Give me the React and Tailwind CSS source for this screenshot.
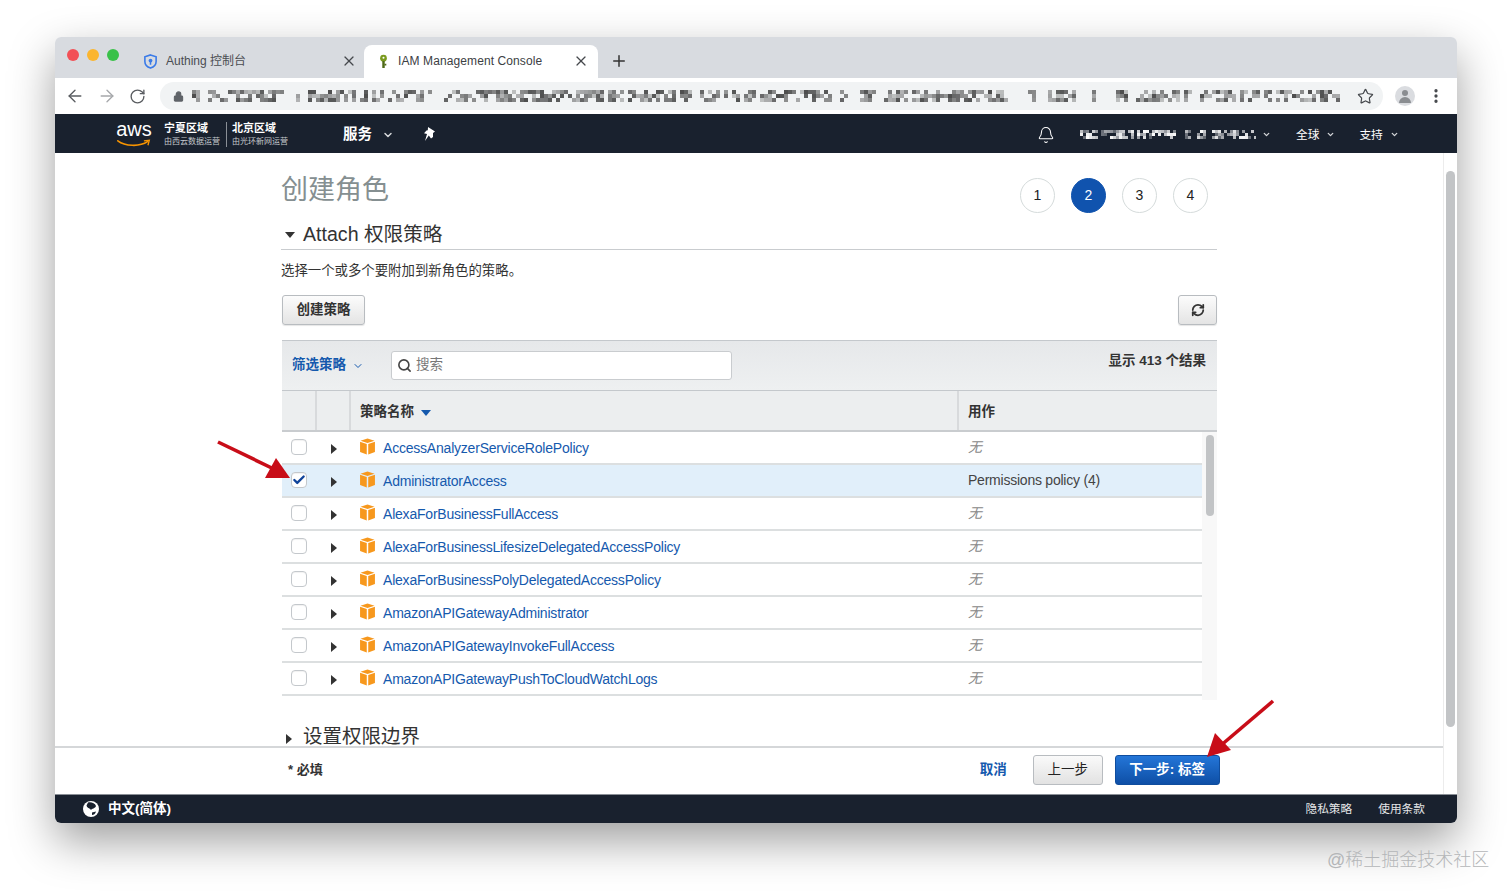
import { ArrowLeft, ArrowRight, RotateCw, Lock, Star, X, Plus, Bell, ChevronDown, Search, RefreshCw, Check, EllipsisVertical } from "lucide-react";

const policies = [
  "AccessAnalyzerServiceRolePolicy",
  "AdministratorAccess",
  "AlexaForBusinessFullAccess",
  "AlexaForBusinessLifesizeDelegatedAccessPolicy",
  "AlexaForBusinessPolyDelegatedAccessPolicy",
  "AmazonAPIGatewayAdministrator",
  "AmazonAPIGatewayInvokeFullAccess",
  "AmazonAPIGatewayPushToCloudWatchLogs",
];

// pixelated url / account name, stable between renders
function Mosaic({ width, height, cell = 4, seed = 7, color = "#222" }) {
  const cells = [];
  let s = seed;
  const next = () => {
    s = (s * 1103515245 + 12345) % 2147483648;
    return Math.floor(s / 65536) % 1000;
  };
  let gapLeft = 0;
  for (let x = 0; x < width; x += cell) {
    if (gapLeft > 0) {
      gapLeft -= 1;
      continue;
    }
    if (next() < 60) gapLeft = 1 + (next() % 3);
    for (let y = 0; y < height; y += cell) {
      const r = next();
      if (r < 380) continue;
      cells.push({ x, y, o: 0.3 + ((r % 70) / 100) });
    }
  }
  return (
    <svg width={width} height={height} className="block shrink-0">
      {cells.map((c) => (
        <rect key={`${c.x}-${c.y}`} x={c.x} y={c.y} width={cell} height={cell} fill={color} opacity={c.o} />
      ))}
    </svg>
  );
}

function Cube({ className }) {
  return (
    <svg viewBox="0 0 16 16" className={className}>
      <path d="M8 0.5 14.6 2.6 8 4.8 1.4 2.6Z" fill="#f7981d" />
      <path d="M1 3.6 7.3 5.7V15.6L1 13.2Z" fill="#f7981d" />
      <path d="M15 3.6 8.7 5.7V15.6L15 13.2Z" fill="#f7981d" />
    </svg>
  );
}

function Caret({ dir = "right", className }) {
  const d = dir === "right" ? "M1 0 7 5 1 10Z" : "M0 1 10 1 5 7Z";
  return (
    <svg viewBox="0 0 10 10" className={className}>
      <path d={d} fill="currentColor" />
    </svg>
  );
}

function PolicyRow({ name, selected }) {
  return (
    <div className={`flex h-[33px] items-center border-b-2 border-[#dcdfe0] ${selected ? "bg-[#e1effa]" : "bg-white"}`}>
      <div className="flex w-[34px] justify-center pr-px">
        <span className="mb-[2px] flex size-4 items-center justify-center rounded-[4px] border border-[#c4c8cc] bg-white shadow-[inset_0_1px_1px_rgba(0,0,0,0.06)]">
          {selected && <Check className="size-3.5 text-[#10439a]" strokeWidth={4} />}
        </span>
      </div>
      <div className="flex w-[34px] justify-center pl-[4px]">
        <Caret className="mt-[3px] size-2.5 text-[#333]" />
      </div>
      <div className="flex w-[608px] items-center pl-[9px]">
        <Cube className="mb-[3px] size-[17px]" />
        <span className="ml-[7px] mt-[1px] text-[14px] tracking-[-0.21px] text-[#1559ad]">{name}</span>
      </div>
      <div className="pl-[10px] text-[14px] tracking-[-0.23px] text-[#444]">
        {selected ? "Permissions policy (4)" : <span className="italic text-[#888]">无</span>}
      </div>
    </div>
  );
}

function StepCircle({ n, active }) {
  return (
    <div
      className={`flex size-[35px] items-center justify-center rounded-full border text-[14px] font-medium ${
        active ? "border-[#1053ae] bg-[#1053ae] text-white" : "border-[#d5dbdb] bg-white text-[#222]"
      }`}
    >
      {n}
    </div>
  );
}

export default function App() {
  return (
    <div className="relative h-[895px] w-[1512px] overflow-hidden bg-white pl-[55px] pt-[37px] font-['Liberation_Sans','Noto_Sans_CJK_SC',sans-serif] text-[#333]">
      <div className="flex h-[786px] w-[1402px] flex-col overflow-hidden rounded-[6px] shadow-[0_18px_45px_rgba(0,0,0,0.38)]">
        {/* Tab strip */}
        <div className="flex h-[41px] shrink-0 items-end bg-[#d8dbe0] pl-3">
          <div className="flex h-[33px] w-[76px] items-start gap-2 pt-[4px]">
            <span className="size-3 rounded-full bg-[#f25056]" />
            <span className="size-3 rounded-full bg-[#fbb52e]" />
            <span className="size-3 rounded-full bg-[#39c149]" />
          </div>
          <div className="flex h-[33px] w-[221px] items-center pb-[1px] text-[12px] text-[#4a4d52]">
            <svg viewBox="0 0 16 16" className="size-[15px]">
              <path d="M8 1 14 3V8C14 11.5 11.2 14 8 15 4.8 14 2 11.5 2 8V3Z" fill="none" stroke="#3b7be8" strokeWidth="1.7" />
              <circle cx="8" cy="7" r="2" fill="#3b7be8" />
              <path d="M8 8v3.5" stroke="#3b7be8" strokeWidth="1.6" />
            </svg>
            <span className="ml-[8px] flex-1">Authing 控制台</span>
            <X className="mr-[7px] size-[16px] text-[#45484c]" strokeWidth={1.8} />
          </div>
          <div className="flex h-[33px] w-[234px] items-center rounded-t-lg bg-white pb-[1px] pl-[12px] text-[12px] text-[#3c4043]">
            <svg viewBox="0 0 16 16" className="size-[15px]">
              <circle cx="8" cy="4.5" r="3.6" fill="#7a9a1e" />
              <circle cx="8" cy="4" r="1.1" fill="#fff" />
              <path d="M6.7 7.5H9.3V15H6.7Z" fill="#4f6a18" />
              <path d="M9 10.5H11V12.3H9Z" fill="#4f6a18" />
            </svg>
            <span className="ml-[7px] flex-1 tracking-[0.1px]">IAM Management Console</span>
            <X className="mr-[9px] size-[16px] text-[#45484c]" strokeWidth={1.8} />
          </div>
          <Plus className="mb-[8px] ml-[12px] size-[18px] text-[#333]" strokeWidth={2} />
        </div>

        {/* Toolbar */}
        <div className="flex h-[36px] shrink-0 items-center bg-white pl-[10px]">
          <ArrowLeft className="size-[20px] text-[#5a5d61]" strokeWidth={1.6} />
          <ArrowRight className="ml-[12px] size-[20px] text-[#a6a8ab]" strokeWidth={1.6} />
          <RotateCw className="ml-[12px] size-[17px] text-[#5a5d61]" strokeWidth={1.9} />
          <div className="ml-[14px] flex h-[28px] w-[1223px] items-center rounded-full bg-[#f1f3f4] pl-[13px]">
            <Lock className="size-[11px] fill-[#5f6368] text-[#5f6368]" strokeWidth={2.4} />
            <div className="ml-[8px] opacity-80 blur-[0.5px]">
              <Mosaic width={1148} height={12} cell={4} />
            </div>
            <Star className="ml-[17px] size-[17px] text-[#45484c]" strokeWidth={1.7} />
          </div>
          <div className="ml-[12px] flex size-[20px] flex-col items-center justify-center gap-px rounded-full bg-[#dadce0]">
            <span className="size-[6px] rounded-full bg-[#8a8d91]" />
            <span className="h-[6px] w-[12px] rounded-t-full bg-[#8a8d91]" />
          </div>
          <EllipsisVertical className="ml-[12px] size-[18px] text-[#45484c]" strokeWidth={2.4} />
        </div>

        {/* AWS nav */}
        <div className="flex h-[39px] shrink-0 items-center bg-[#19212e] pl-[60px] pt-[2px] text-white">
          <div className="relative -mt-[2px] h-[28px] w-[38px]">
            <span className="block text-center text-[20px] leading-[19px] font-normal">aws</span>
            <svg viewBox="0 0 38 10" className="absolute bottom-0 left-0 h-[9px] w-[38px]">
              <path d="M1 2C9 8 25 9 34 3" fill="none" stroke="#f79400" strokeWidth="1.8" strokeLinecap="round" />
              <path d="M30 2 36 1.5 34.5 7" fill="none" stroke="#f79400" strokeWidth="1.5" />
            </svg>
          </div>
          <div className="-mt-[1px] ml-[11px] w-[62px]">
            <div className="text-[11px] leading-[13px] font-bold">宁夏区域</div>
            <div className="mt-[2px] whitespace-nowrap text-[8px] leading-[10px] text-[#c4c8cc]">由西云数据运营</div>
          </div>
          <div className="-mt-[1px] h-[25px] w-px bg-[#8a8f96]" />
          <div className="-mt-[1px] ml-[5px] w-[111px]">
            <div className="text-[11px] leading-[13px] font-bold">北京区域</div>
            <div className="mt-[2px] whitespace-nowrap text-[8px] leading-[10px] text-[#c4c8cc]">由光环新网运营</div>
          </div>
          <span className="text-[14.5px] font-bold">服务</span>
          <ChevronDown className="ml-[10px] size-[12px] text-[#d5d7da]" strokeWidth={3} />
          <svg viewBox="0 0 16 16" className="-mt-[2px] ml-[28px] size-[16px]">
            <path d="M6 1 13 5.5 11 7 11 11 9 12.5 6.8 9.6 3 15 5 8 2 7.2 4.5 4.5 5.8 4.3Z" fill="#fff" />
          </svg>
          <div className="ml-[599px] flex items-center">
            <Bell className="size-[18px] text-white" strokeWidth={1.4} />
            <div className="ml-[25px]">
              <Mosaic width={176} height={9} cell={3} seed={41} color="#fff" />
            </div>
            <ChevronDown className="ml-[6px] size-[9px] text-[#d5d7da]" strokeWidth={3.5} />
            <span className="ml-[25px] text-[11.7px]">全球</span>
            <ChevronDown className="ml-[7px] size-[9px] text-[#d5d7da]" strokeWidth={3.5} />
            <span className="ml-[24px] text-[11.7px]">支持</span>
            <ChevronDown className="ml-[7px] size-[9px] text-[#d5d7da]" strokeWidth={3.5} />
          </div>
        </div>

        {/* Body */}
        <div className="flex min-h-0 flex-1 bg-white">
          <div className="flex w-[1389px] flex-col border-r border-[#ececec]">
            <div className="h-[593px] overflow-hidden pl-[226px]">
              <div className="w-[936px]">
                <div className="flex h-[60px] items-start justify-between pr-[9px] pt-[26px]">
                  <h1 className="-mt-[7px] text-[27px] leading-[36px] font-normal text-[#858f91]">创建角色</h1>
                  <div className="-mt-px flex gap-4">
                    <StepCircle n={1} />
                    <StepCircle n={2} active />
                    <StepCircle n={3} />
                    <StepCircle n={4} />
                  </div>
                </div>
                <div className="mt-[8px] flex h-[29px] items-center gap-[8px] border-b border-[#c9cccf] pb-[2px] pl-[4px]">
                  <Caret dir="down" className="mt-1 size-2.5 text-[#333]" />
                  <span className="text-[19.6px] leading-[26px]">Attach 权限策略</span>
                </div>
                <p className="mt-[12px] text-[13.4px] leading-[18px] text-[#333]">选择一个或多个要附加到新角色的策略。</p>
                <div className="mt-[15px] flex justify-between pl-px">
                  <button className="h-[30px] w-[83px] rounded-[3px] border border-[#b8bcc0] bg-linear-to-b from-[#fcfcfc] to-[#e4e4e4] text-[13.5px] font-bold text-[#333] shadow-[0_1px_1px_rgba(0,0,0,0.1)]">
                    创建策略
                  </button>
                  <button className="flex h-[30px] w-[39px] items-center justify-center rounded-[3px] border border-[#b8bcc0] bg-linear-to-b from-[#fcfcfc] to-[#e4e4e4] shadow-[0_1px_1px_rgba(0,0,0,0.1)]">
                    <RefreshCw className="size-[14px] text-[#333]" strokeWidth={3} />
                  </button>
                </div>

                {/* Policy table */}
                <div className="mt-[15px] pl-px">
                  <div className="flex h-[51px] items-center border-y border-[#c4c8cc] bg-linear-to-b from-[#e6e8ea] to-[#eef0f1] pl-[10px] pr-[11px]">
                    <span className="text-[13.5px] font-bold text-[#1559ad]">筛选策略</span>
                    <ChevronDown className="ml-[6px] size-[12px] text-[#1559ad]" strokeWidth={2} />
                    <div className="mb-px ml-[27px] flex h-[29px] w-[341px] items-center rounded-[3px] border border-[#c9cccf] bg-white pl-[5px]">
                      <Search className="size-[15px] text-[#444]" strokeWidth={2.6} />
                      <span className="ml-[4px] text-[13.5px] text-[#777]">搜索</span>
                    </div>
                    <span className="mb-[8px] ml-auto text-[13.5px] font-bold text-[#333]">显示 413 个结果</span>
                  </div>
                  <div className="flex h-[41px] border-b-2 border-[#c9cccf] bg-[#eceeef]">
                    <div className="w-[35px] border-r-2 border-[#d8dadc]" />
                    <div className="w-[34px] border-r-2 border-[#d8dadc]" />
                    <div className="flex w-[608px] items-center border-r-2 border-[#d8dadc] pl-[9px] pt-[3px] text-[13.5px] font-bold">
                      策略名称
                      <Caret dir="down" className="ml-[7px] mt-[3px] size-2.5 text-[#1559ad]" />
                    </div>
                    <div className="flex items-center pl-[9px] pt-[3px] text-[13.5px] font-bold">用作</div>
                  </div>
                  <div className="flex h-[268px] overflow-hidden">
                    <div className="w-[920px]">
                      {policies.map((name) => (
                        <PolicyRow key={name} name={name} selected={name === "AdministratorAccess"} />
                      ))}
                    </div>
                    <div className="flex-1 bg-[#f8f8f8] pl-[4px] pt-[3px]">
                      <div className="h-[81px] w-[8px] rounded-full bg-[#c2c4c6]" />
                    </div>
                  </div>
                </div>

                <div className="mt-[27px] flex items-center gap-[8px] pl-[4px]">
                  <Caret className="mt-1 size-2.5 text-[#333]" />
                  <span className="text-[19.5px] leading-[19px]">设置权限边界</span>
                </div>
              </div>
            </div>

            {/* Action bar */}
            <div className="flex h-[48px] items-center border-t-2 border-[#d5d7d9] pb-[2px] pl-[233px]">
              <span className="text-[13px] font-bold text-[#333]">* 必填</span>
              <span className="ml-[657px] text-[13.5px] font-bold text-[#1559ad]">取消</span>
              <button className="ml-[26px] h-[30px] w-[70px] rounded-[3px] border border-[#b8bcc0] bg-linear-to-b from-[#fafafa] to-[#e2e2e2] text-[13.5px] text-[#222]">
                上一步
              </button>
              <button className="ml-[12px] h-[30px] w-[105px] rounded-[3px] border border-[#0f4d9e] bg-linear-to-b from-[#2476d8] to-[#0e4fa6] text-[13.5px] font-bold text-white">
                下一步: 标签
              </button>
            </div>
          </div>
          <div className="flex-1 pl-[2px] pt-[18px]">
            <div className="h-[556px] w-[9px] rounded-full bg-[#c2c4c6]" />
          </div>
        </div>

        {/* Footer */}
        <div className="flex h-[29px] shrink-0 items-center border-t border-[#8a8f96] bg-[#19212e] pl-[28px] pr-[32px] text-white">
          <svg viewBox="0 0 16 16" className="size-[16px]">
            <circle cx="8" cy="8" r="8" fill="#fff" />
            <path d="M5 1.5C8 .8 12 2 13 5 12 8 9 7 8 9 6.5 7 4 7 3.5 4.5ZM9 11.5 13 10.5C12.5 13 10.5 14 9 14Z" fill="#19212e" />
          </svg>
          <span className="ml-[9px] text-[13.5px] font-bold">中文(简体)</span>
          <span className="ml-auto text-[11.7px] text-[#e4e6e8]">隐私策略</span>
          <span className="ml-[26px] text-[11.7px] text-[#e4e6e8]">使用条款</span>
        </div>
      </div>

      {/* Annotation arrows */}
      <svg viewBox="0 0 80 46" className="absolute left-[216px] top-[440px] h-[46px] w-[80px]">
        <path d="M2 2 60 30" stroke="#c80d18" strokeWidth="3.6" />
        <path d="M74 38 49 38 60 18Z" fill="#c80d18" />
      </svg>
      <svg viewBox="0 0 74 64" className="absolute left-[1203px] top-[698px] h-[64px] w-[74px]">
        <path d="M70 3 16 49" stroke="#c80d18" strokeWidth="3.6" />
        <path d="M4 59 12 35 28 52Z" fill="#c80d18" />
      </svg>
      <span className="absolute left-[1327px] top-[849px] text-[18px] leading-[22px] font-light text-[#b4b6b8]">@稀土掘金技术社区</span>
    </div>
  );
}
